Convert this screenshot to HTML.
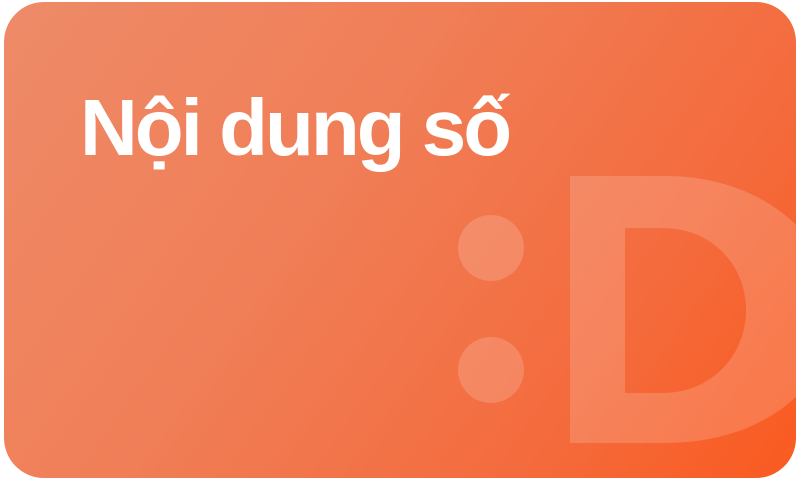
<!DOCTYPE html>
<html><head><meta charset="utf-8"><style>
html,body{margin:0;padding:0;background:#fff;width:800px;height:481px;overflow:hidden}
.card{position:absolute;left:4px;top:2px;width:792px;height:476px;border-radius:40px;overflow:hidden;
background:linear-gradient(125deg,#ee8b68 0%,#f07e57 40%,#f46b3d 75%,#fa5a1f 100%);}
.t{position:absolute;left:76px;top:80px;font-family:"Liberation Sans",sans-serif;font-weight:bold;font-size:80px;color:#fff;white-space:nowrap;letter-spacing:-3px}
svg{position:absolute;left:0;top:0}
</style></head><body>
<div class="card">
<svg width="792" height="476" viewBox="4 2 792 476">
<g fill="#fff" fill-opacity="0.17">
<circle cx="491" cy="248" r="33"/>
<circle cx="491" cy="370" r="33"/>
<path fill-rule="evenodd" d="M570,176 H665 C770,176 835,245 835,310 C835,380 770,443 665,443 H570 Z M625,228 H662 C712,228 746,265 746,310 C746,355 712,393 662,393 H625 Z"/>
</g>
</svg>
<div class="t">Nội dung số</div>
</div>
</body></html>
